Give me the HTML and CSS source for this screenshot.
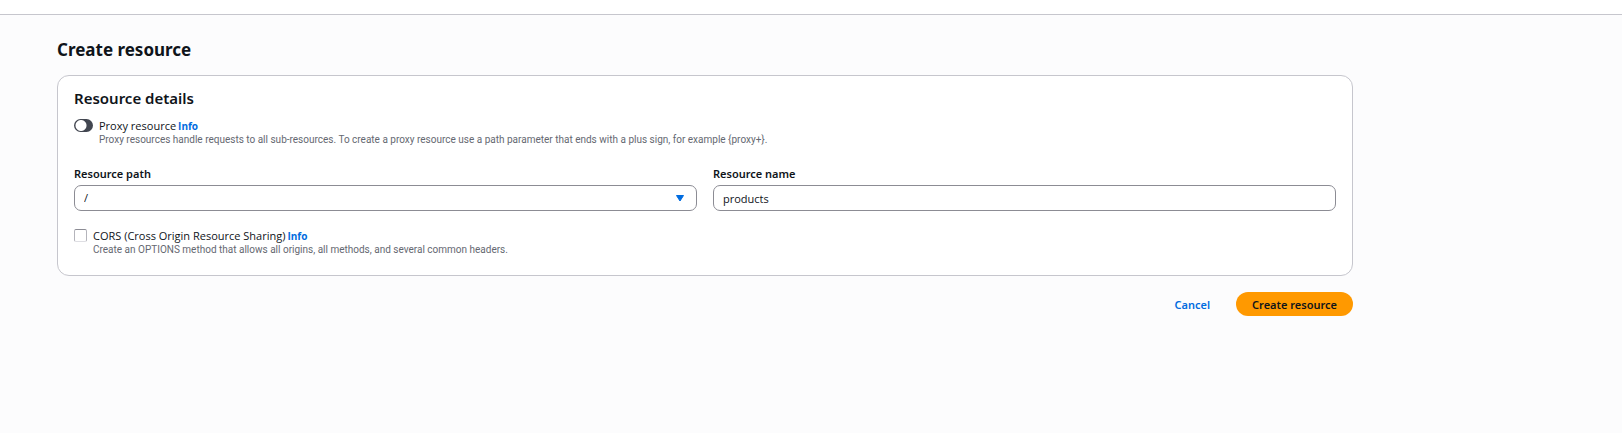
FILE: index.html
```html
<!DOCTYPE html>
<html lang="en">
<head>
<meta charset="utf-8">
<meta name="viewport" content="width=device-width, initial-scale=1">
<title>Create resource</title>
<link rel="stylesheet" href="styles.css">
</head>
<body>
<header class="topbar"></header>
<main class="page">
  <h1 class="page-title">Create resource</h1>
  <form class="form">
    <section class="card">
      <h2 class="card-title">Resource details</h2>
      <div class="option option-toggle">
        <input class="toggle" type="checkbox" role="switch" id="proxy" aria-describedby="proxy-help">
        <div class="option-text">
          <div class="option-line"><label for="proxy">Proxy resource</label><a class="info" href="#">Info</a></div>
          <p class="help" id="proxy-help">Proxy resources handle requests to all sub-resources. To create a proxy resource use a path parameter that ends with a plus sign, for example {proxy+}.</p>
        </div>
      </div>
      <div class="fields">
        <div class="field">
          <label class="field-label" for="path">Resource path</label>
          <div class="select-wrap">
            <select class="control" id="path"><option>/</option></select>
            <svg class="caret" viewBox="0 0 8 7" aria-hidden="true"><path d="M0.5 0.5h7L4 6z"/></svg>
          </div>
        </div>
        <div class="field">
          <label class="field-label" for="name">Resource name</label>
          <input class="control" type="text" id="name" value="products">
        </div>
      </div>
      <div class="option">
        <input class="checkbox" type="checkbox" id="cors" aria-describedby="cors-help">
        <div class="option-text">
          <div class="option-line"><label for="cors">CORS (Cross Origin Resource Sharing)</label><a class="info" href="#">Info</a></div>
          <p class="help" id="cors-help">Create an OPTIONS method that allows all origins, all methods, and several common headers.</p>
        </div>
      </div>
    </section>
    <div class="actions">
      <button class="button" type="button">Cancel</button>
      <button class="button button-primary" type="submit">Create resource</button>
    </div>
  </form>
</main>
</body>
</html>
```

FILE: styles.css
```css
* {
  box-sizing: border-box;
}

body {
  margin: 0;
  min-height: 100vh;
  background: #fcfcfd;
  color: #0f141a;
  font: 11px/14px "Open Sans", "Noto Sans", sans-serif;
}

h1, h2, p {
  margin: 0;
}

.topbar {
  height: 15px;
  background: #fff;
  border-bottom: 1px solid #c6c6cd;
}

.page {
  max-width: 1353px;
  padding: 23px 0 24px 57px;
}

.page-title,
.card-title,
.field-label,
.button {
  font-family: "Noto Sans", "Open Sans", sans-serif;
  font-weight: 600;
}

.page-title {
  font-size: 17px;
  line-height: 24px;
  font-weight: 700;
}

.card {
  margin-top: 13px;
  padding: 12px 16px 18px;
  background: #fff;
  border: 1px solid #c6c6cd;
  border-radius: 12px;
}

.card-title {
  font-size: 15px;
  line-height: 20px;
}

.option {
  display: flex;
  align-items: flex-start;
  gap: 6px;
}

.option-toggle {
  margin-top: 11px;
}

.option-line {
  display: flex;
  gap: 2px;
}

.info {
  color: #006ce0;
  font-size: 10px;
  font-weight: 700;
  text-decoration: none;
}

.help {
  color: #656871;
  font-family: Roboto, "Open Sans", sans-serif;
  font-size: 10px;
}

.toggle {
  flex: none;
  appearance: none;
  width: 19px;
  height: 13px;
  margin: 0;
  border-radius: 8px;
  background: radial-gradient(circle at 7px 50%, #fff 5px, #424650 6px);
}

.checkbox {
  flex: none;
  appearance: none;
  width: 13px;
  height: 13px;
  margin: 0;
  background: #fff;
  border: 1px solid #b4b4bb;
  border-top-color: #8c8c94;
  border-bottom-color: #dedee3;
  border-radius: 2px;
}

.checkbox:checked {
  background: #006ce0;
}

.toggle:checked {
  background: radial-gradient(circle at 12px 50%, #fff 5px, #006ce0 6px);
}

.fields {
  display: grid;
  grid-template-columns: 1fr 1fr;
  gap: 16px;
  margin: 20px 0 18px;
}

.field-label {
  display: block;
  margin-bottom: 4px;
}

.select-wrap {
  position: relative;
}

.control {
  display: block;
  appearance: none;
  width: 100%;
  height: 26px;
  padding: 0 9px;
  background: #fff;
  border: 1px solid #8c8c94;
  border-radius: 7px;
  color: inherit;
  font: inherit;
}

.caret {
  position: absolute;
  top: 10px;
  right: 13px;
  width: 8px;
  height: 7px;
  fill: #006ce0;
  stroke: #006ce0;
  stroke-linejoin: round;
  pointer-events: none;
}

.actions {
  display: flex;
  justify-content: flex-end;
  gap: 10px;
  margin-top: 16px;
}

.button {
  height: 24px;
  padding: 0 16px;
  border: 0;
  border-radius: 12px;
  background: none;
  color: #006ce0;
  font-size: 11px;
}

.button-primary {
  background: #ff9900;
  color: #0f141a;
}
```
